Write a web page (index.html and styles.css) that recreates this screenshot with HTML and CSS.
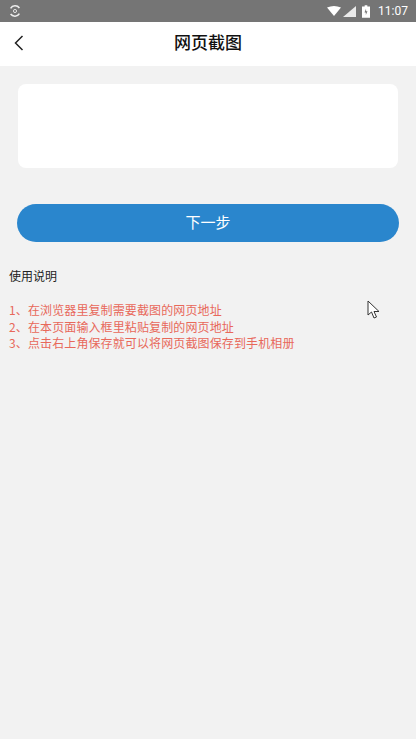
FILE: index.html
```html
<!DOCTYPE html>
<html lang="zh">
<head>
<meta charset="utf-8">
<title>网页截图</title>
<link rel="stylesheet" href="styles.css">
</head>
<body>
<div class="status">
  <svg class="sync" width="14" height="14" viewBox="0 0 16 16" fill="none" stroke="#eee" stroke-width="1.800"><path d="M3 5A6 6 0 0 1 13 4.500"/><path d="M13 11A6 6 0 0 1 3 11.500"/><circle cx="8" cy="8" r="1.800" stroke-width="1"/></svg>
  <div class="status-right">
    <svg class="wifi" width="14" height="10" viewBox="0 0 14 10"><path d="M0 1.500Q7-1.500 14 1.500L7 10Z" fill="#fff"/></svg>
    <svg class="signal" width="13" height="11" viewBox="0 0 13 11"><path d="M13 0V11H0Z" fill="#fff" fill-opacity=".85"/></svg>
    <svg class="batt" width="8" height="13" viewBox="0 0 9 14"><path d="M3 0h3v1.500h3V14H0V1.500h3Z" fill="#fff"/><path d="M4.500 4L2.800 8h1.500v3l1.900-4.200H4.700Z" fill="#777"/></svg>
    <span class="time">11:07</span>
  </div>
</div>
<header class="nav">
  <svg class="back" width="10" height="16" viewBox="0 0 10 16" fill="none" stroke="#222" stroke-width="1.500"><path d="M8.500 1L1.500 8l7 7"/></svg>
  <h1>网页截图</h1>
</header>
<main class="content">
  <div class="input-card"></div>
  <button class="next" type="button">下一步</button>
  <section class="help">
    <h2>使用说明</h2>
    <ol>
      <li>1、在浏览器里复制需要截图的网页地址</li>
      <li>2、在本页面输入框里粘贴复制的网页地址</li>
      <li>3、点击右上角保存就可以将网页截图保存到手机相册</li>
    </ol>
  </section>
</main>
<svg class="cursor" width="14" height="20" viewBox="0 0 14 20"><path d="M1 1V15L4.500 12L7 18L9.500 17L7 11.500H12Z" fill="#fff" stroke="#333" stroke-width="1"/></svg>
</body>
</html>
```
FILE: styles.css
```css
html, body {
  margin: 0;
  height: 739px;
  overflow: hidden;
  background: #f2f2f2;
  font-family: "Noto Sans CJK SC", "Liberation Sans", sans-serif;
}
.status {
  height: 22px;
  background: #757575;
  display: flex;
  align-items: center;
  justify-content: space-between;
  padding: 0 8px;
}
.status-right {
  display: flex;
  align-items: center;
}
.signal { margin-left: 2px; }
.batt { margin-left: 6px; }
.time {
  font: 12px "Roboto", sans-serif;
  color: #fff;
  margin-left: 8px;
}
.nav {
  height: 44px;
  background: #fff;
  display: flex;
  align-items: center;
  justify-content: center;
  position: relative;
}
.back {
  position: absolute;
  left: 14px;
  top: 13px;
}
.nav h1 {
  margin: 0 0 5px;
  font-size: 17px;
  font-weight: 500;
  color: #111;
}
.content {
  display: flex;
  flex-direction: column;
  padding: 18px 0 0;
}
.input-card {
  height: 84px;
  margin: 0 18px;
  background: #fff;
  border-radius: 8px;
}
.next {
  height: 38px;
  margin: 36px 17px 0;
  border: 0;
  border-radius: 19px;
  background: #2a86cd;
  color: #fff;
  font: 15px "Noto Sans CJK SC", sans-serif;
  padding: 0 0 3px;
}
.help {
  margin: 25px 0 0 9px;
}
.help h2 {
  margin: 0;
  font-size: 12px;
  line-height: 18px;
  font-weight: 400;
  color: #222;
}
.help ol {
  margin: 17px 0 0;
  padding: 0;
  list-style: none;
  font-size: 12px;
  line-height: 16.500px;
  letter-spacing: .12px;
  color: #e8685a;
}
.cursor {
  position: absolute;
  left: 367px;
  top: 300px;
}
```
